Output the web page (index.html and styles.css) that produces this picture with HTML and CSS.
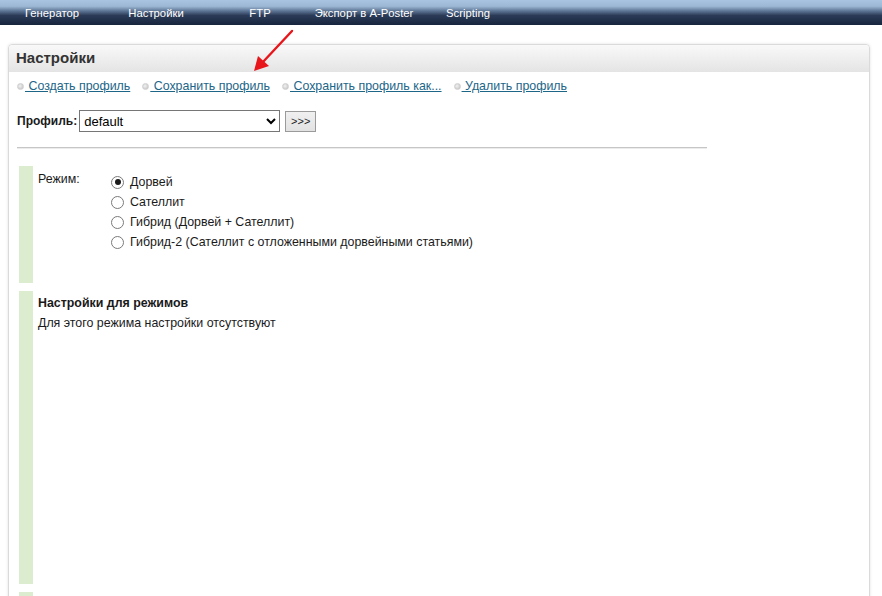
FILE: index.html
```html
<!DOCTYPE html>
<html lang="ru">
<head>
  <meta charset="UTF-8">
  <title>Настройки</title>
  <link rel="stylesheet" href="styles.css">
</head>
<body>

  <!-- Top menu -->
  <div class="topnav">
    <a href="#">Генератор</a>
    <a href="#">Настройки</a>
    <a href="#">FTP</a>
    <a href="#">Экспорт в A-Poster</a>
    <a href="#">Scripting</a>
  </div>

  <!-- Settings panel -->
  <div class="panel">
    <div class="panel-head">Настройки</div>

    <div class="actions">
      <span class="action"><i class="dot"></i><a href="#"> Создать профиль</a></span>
      <span class="action"><i class="dot"></i><a href="#"> Сохранить профиль</a></span>
      <span class="action"><i class="dot"></i><a href="#"> Сохранить профиль как...</a></span>
      <span class="action"><i class="dot"></i><a href="#"> Удалить профиль</a></span>
    </div>

    <div class="profile-row">
      <label for="profile">Профиль:</label>
      <select id="profile">
        <option>default</option>
      </select>
      <button class="go-btn">&gt;&gt;&gt;</button>
    </div>

    <div class="divider"></div>

    <div class="block block-mode">
      <div class="block-label">Режим:</div>
      <div class="radio-list">
        <label class="radio"><input type="radio" name="mode" checked> Дорвей</label>
        <label class="radio"><input type="radio" name="mode"> Сателлит</label>
        <label class="radio"><input type="radio" name="mode"> Гибрид (Дорвей + Сателлит)</label>
        <label class="radio"><input type="radio" name="mode"> Гибрид-2 (Сателлит с отложенными дорвейными статьями)</label>
      </div>
    </div>

    <div class="block block-opts">
      <div class="block-body">
        <div class="block-title">Настройки для режимов</div>
        <div class="block-text">Для этого режима настройки отсутствуют</div>
      </div>
    </div>

    <div class="block block-next"></div>
  </div>

  <!-- Red pointer arrow -->
  <svg class="pointer" width="60" height="60" viewBox="0 0 60 60">
    <line x1="52" y1="6" x2="22" y2="38" stroke="#e8161b" stroke-width="2.4" stroke-linecap="round"/>
    <polygon points="14,46 18,31 29,41" fill="#e8161b"/>
  </svg>

</body>
</html>
```

FILE: styles.css
```css
body {
  margin: 0;
  font-family: "Liberation Sans", Arial, sans-serif;
  font-size: 12.4px;
  color: #1a1a1a;
  background: #fff;
  overflow: hidden;
}

/* Top menu bar */
.topnav {
  display: flex;
  height: 25px;
  background: linear-gradient(#a8c4e0 0%, #9cb8d4 25%, #5d7494 44%, #2b3b57 62%, #18253d 100%);
}

.topnav a {
  width: 104px;
  text-align: center;
  color: #fff;
  font-size: 11.3px;
  line-height: 26px;
  text-decoration: none;
}

/* Panel */
.panel {
  margin: 19px 12px 0 8px;
  border: 1px solid #dadada;
  border-radius: 4px;
  box-shadow: 0 0 3px rgba(0, 0, 0, 0.12);
  padding-bottom: 20px;
}

.panel-head {
  height: 27px;
  padding-left: 7px;
  line-height: 26px;
  font-size: 15px;
  font-weight: bold;
  color: #333;
  background: linear-gradient(#f9f9f9, #e4e4e4);
  border-radius: 4px 4px 0 0;
}

/* Profile actions */
.actions {
  display: flex;
  gap: 12px;
  padding: 6px 8px 0;
  line-height: 16px;
}

.action {
  display: flex;
  align-items: center;
}

.dot {
  width: 7px;
  height: 7px;
  border-radius: 50%;
  background: radial-gradient(circle at 40% 40%, #f2f2f2, #bdbdbd);
  border: 1px solid #cfcfcf;
  box-sizing: border-box;
  margin-right: 1px;
}

.action a {
  color: #1d6688;
  text-decoration: underline;
  white-space: pre;
}

/* Profile select */
.profile-row {
  display: flex;
  align-items: center;
  margin: 16px 8px 0;
  height: 22px;
}

.profile-row label {
  font-size: 12px;
  font-weight: bold;
  margin-right: 2px;
}

.profile-row select {
  width: 201px;
  height: 22px;
  border: 1px solid #767676;
  border-radius: 0;
  background: #fff;
  font-family: "Liberation Sans", Arial, sans-serif;
  font-size: 13px;
  color: #000;
  padding: 0;
}

.go-btn {
  margin-left: 5px;
  width: 31px;
  height: 21px;
  border: 1px solid #9a9a9a;
  background: linear-gradient(#f0f0f0, #e2e2e2);
  font-family: "Liberation Sans", Arial, sans-serif;
  font-size: 11px;
  color: #222;
  padding: 0;
}

.divider {
  margin: 15px 0 0 8px;
  width: 690px;
  border-top: 1px solid #c6c6c6;
  border-bottom: 1px solid #ececec;
}

/* Option blocks with green marker */
.block {
  display: flex;
  margin: 17px 0 0 10px;
  border-left: 14px solid #dcedcf;
  padding: 6px 0 0 5px;
  box-sizing: border-box;
}

.block-mode {
  height: 117px;
}

.block-opts {
  height: 293px;
  margin-top: 8px;
  padding-top: 4px;
}

.block-next {
  height: 40px;
  margin-top: 8px;
}

.block-label {
  width: 73px;
  line-height: 14px;
}

.radio {
  display: flex;
  align-items: center;
  height: 20px;
}

.radio input {
  appearance: none;
  width: 13px;
  height: 13px;
  margin: 0 6px 0 0;
  border: 1px solid #7a7a7a;
  border-radius: 50%;
  background: #fff;
  box-sizing: border-box;
  position: relative;
}

.radio input:checked::after {
  content: "";
  position: absolute;
  left: 2.5px;
  top: 2.5px;
  width: 6px;
  height: 6px;
  border-radius: 50%;
  background: #1a1a1a;
}

.block-title {
  font-weight: bold;
  line-height: 16px;
}

.block-text {
  margin-top: 4px;
  line-height: 16px;
}

.pointer {
  position: absolute;
  left: 240px;
  top: 25px;
}
```
